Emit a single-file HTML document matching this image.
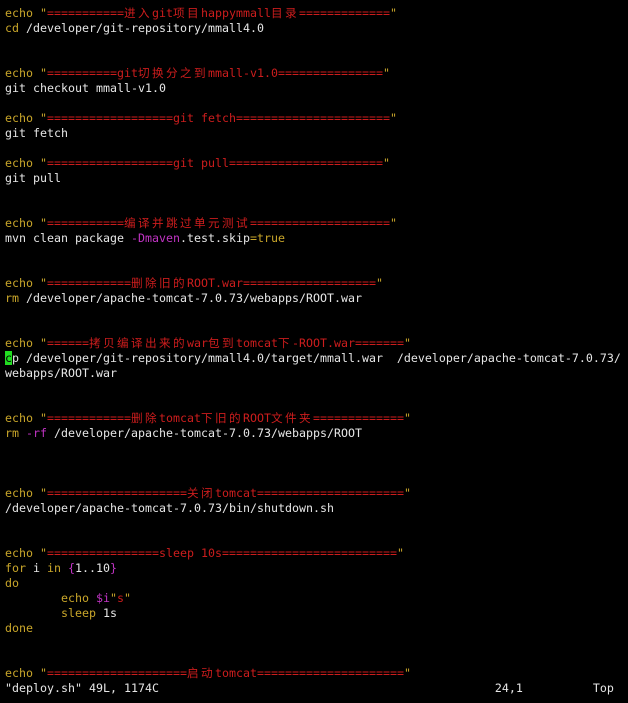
<!DOCTYPE html>
<html><head><meta charset="utf-8"><style>
body{margin:0;background:#000;width:628px;height:703px;overflow:hidden}
#t{position:absolute;left:5px;top:6px;font-family:"DejaVu Sans Mono","Liberation Mono","Noto Sans CJK SC",monospace;font-size:11.63px;color:#e6e6e6}
#t div{height:15px;line-height:15px;white-space:pre}
.y{color:#c9a62a}.r{color:#cc1d1d}.m{color:#c134c4}
.c{font-family:"Noto Sans CJK SC",sans-serif;letter-spacing:2.37px}
.cur{background:#22dd22;color:#000}
</style></head><body><div id="t">
<div><span class="y">echo "</span><span class="r">===========<span class="c">进入</span>git<span class="c">项目</span>happymmall<span class="c">目录</span>=============</span><span class="y">"</span></div>
<div><span class="y">cd</span> /developer/git-repository/mmall4.0</div>
<div></div><div></div>
<div><span class="y">echo "</span><span class="r">==========git<span class="c">切换分之到</span>mmall-v1.0===============</span><span class="y">"</span></div>
<div>git checkout mmall-v1.0</div>
<div></div>
<div><span class="y">echo "</span><span class="r">==================git fetch======================</span><span class="y">"</span></div>
<div>git fetch</div>
<div></div>
<div><span class="y">echo "</span><span class="r">==================git pull======================</span><span class="y">"</span></div>
<div>git pull</div>
<div></div><div></div>
<div><span class="y">echo "</span><span class="r">===========<span class="c">编译并跳过单元测试</span>====================</span><span class="y">"</span></div>
<div>mvn clean package <span class="m">-Dmaven</span>.test.skip<span class="y">=true</span></div>
<div></div><div></div>
<div><span class="y">echo "</span><span class="r">============<span class="c">删除旧的</span>ROOT.war===================</span><span class="y">"</span></div>
<div><span class="y">rm</span> /developer/apache-tomcat-7.0.73/webapps/ROOT.war</div>
<div></div><div></div>
<div><span class="y">echo "</span><span class="r">======<span class="c">拷贝编译出来的</span>war<span class="c">包到</span>tomcat<span class="c">下</span>-ROOT.war=======</span><span class="y">"</span></div>
<div><span class="cur">c</span>p /developer/git-repository/mmall4.0/target/mmall.war  /developer/apache-tomcat-7.0.73/</div>
<div>webapps/ROOT.war</div>
<div></div><div></div>
<div><span class="y">echo "</span><span class="r">============<span class="c">删除</span>tomcat<span class="c">下旧的</span>ROOT<span class="c">文件夹</span>=============</span><span class="y">"</span></div>
<div><span class="y">rm</span> <span class="m">-rf</span> /developer/apache-tomcat-7.0.73/webapps/ROOT</div>
<div></div><div></div><div></div>
<div><span class="y">echo "</span><span class="r">====================<span class="c">关闭</span>tomcat=====================</span><span class="y">"</span></div>
<div>/developer/apache-tomcat-7.0.73/bin/shutdown.sh</div>
<div></div><div></div>
<div><span class="y">echo "</span><span class="r">================sleep 10s=========================</span><span class="y">"</span></div>
<div><span class="y">for</span> i <span class="y">in</span> <span class="m">{</span>1..10<span class="m">}</span></div>
<div><span class="y">do</span></div>
<div>        <span class="y">echo</span> <span class="m">$i</span><span class="y">"</span><span class="r">s</span><span class="y">"</span></div>
<div>        <span class="y">sleep</span> 1s</div>
<div><span class="y">done</span></div>
<div></div><div></div>
<div><span class="y">echo "</span><span class="r">====================<span class="c">启动</span>tomcat=====================</span><span class="y">"</span></div>
<div>"deploy.sh" 49L, 1174C                                                24,1          Top</div>
</div></body></html>
